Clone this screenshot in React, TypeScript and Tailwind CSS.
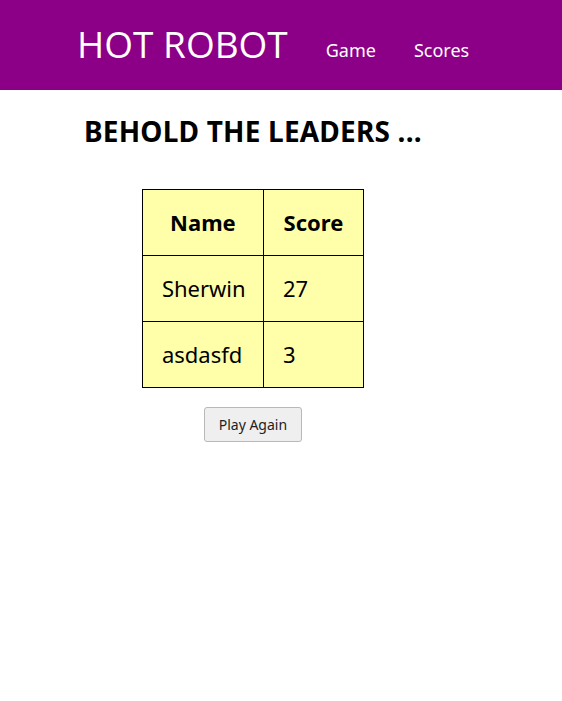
import React from 'react';

const scores = [
  { name: 'Sherwin', score: 27 },
  { name: 'asdasfd', score: 3 },
];

const App: React.FC = () => {
  return (
    <div className="min-h-[701px] bg-white font-['Noto_Sans',sans-serif]">
      <header className="h-[90px] bg-[#8b0086] flex items-center pl-[77px]">
        <h1 className="text-[37px] text-white leading-none font-['Open_Sans',sans-serif] mr-[38px] pb-[3px]">HOT ROBOT</h1>
        <nav className="flex gap-[38px] text-[18px] text-white pt-[10px]">
          <a>Game</a>
          <a>Scores</a>
        </nav>
      </header>

      <div className="ml-[84px] inline-flex flex-col items-center">
        <h2 className="mt-[22px] text-[28px] font-bold text-black leading-[38px] tracking-[0.2px]">
          BEHOLD THE LEADERS ...
        </h2>

        <table className="mt-[39px] border-collapse bg-[#ffffaa] text-[22px] text-black">
          <thead>
            <tr>
              <th className="border border-black h-[66px] w-[121px] font-bold text-center">Name</th>
              <th className="border border-black h-[66px] w-[100px] font-bold text-center">Score</th>
            </tr>
          </thead>
          <tbody>
            {scores.map((s) => (
              <tr key={s.name}>
                <td className="border border-black h-[66px] pl-[19px] text-left">{s.name}</td>
                <td className="border border-black h-[66px] pl-[19px] text-left">{s.score}</td>
              </tr>
            ))}
          </tbody>
        </table>

        <button className="mt-[19px] h-[35px] px-[14px] bg-[#efefef] border border-[#b8b8b8] rounded-[3px] text-[14px] text-[#222]">
          Play Again
        </button>
      </div>
    </div>
  );
};

export default App;
